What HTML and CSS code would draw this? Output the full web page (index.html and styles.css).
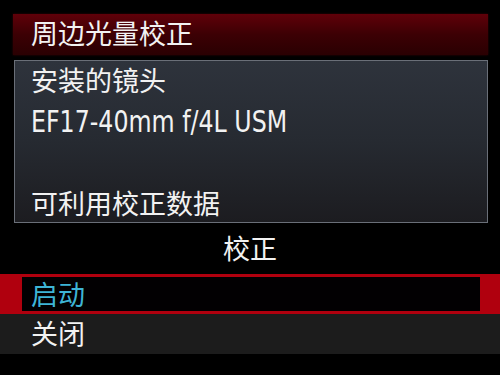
FILE: index.html
```html
<!DOCTYPE html>
<html>
    <head>
        <title>周边光量校正</title>
        <link rel="stylesheet" href="styles.css">
    </head>
    <body>
        <div class='screen'>
            <div class='title'>周边光量校正</div>
            <div class='info'>
                <div class='line'>安装的镜头</div>
                <div class='line'><span class='latin'>EF17-40mm f/4L USM</span></div>
                <div class='line'></div>
                <div class='line'>可利用校正数据</div>
            </div>
            <div class='label'>校正</div>
            <div class='option selected'><div class='inner'>启动</div></div>
            <div class='option'><div class='inner'>关闭</div></div>
        </div>
    </body>
</html>
```

FILE: styles.css
```css
body {
    margin:0;
    background:#000;
    color:#f2f2f2;
    font:27px/38px "Noto Sans CJK SC", sans-serif;
}
.screen {
    width:500px;
    height:375px;
    display:flex;
    flex-direction:column;
}
.title {
    margin:14px 12px 0 13px;
    height:41px;
    padding-left:18px;
    background:linear-gradient(#600009, #3c0004 50%, #2a0002);
    box-shadow:0 0 2px #3a0004;
}
.info {
    margin:5px 12px 0 14px;
    height:161px;
    padding-left:16px;
    border:1px solid #6a6f78;
    background:linear-gradient(#2e333c, #262a31 50%, #1c1c20);
}
.line {
    height:41px;
}
.latin {
    display:inline-block;
    font-family:"DejaVu Sans Condensed", sans-serif;
    font-size:31px;
    transform:scaleX(0.85);
    transform-origin:left;
}
.label {
    height:51px;
    text-align:center;
    line-height:50px;
}
.option {
    height:40px;
}
.option .inner {
    height:100%;
    padding-left:31px;
    box-sizing:border-box;
}
.selected {
    background:#b0000e;
    padding:3px 20px 3px 22px;
    box-sizing:border-box;
}
.selected .inner {
    background:#020002;
    padding-left:9px;
    line-height:33px;
    color:#3eb4d6;
}
.option + .option {
    background:#1c1c1c;
}
```
